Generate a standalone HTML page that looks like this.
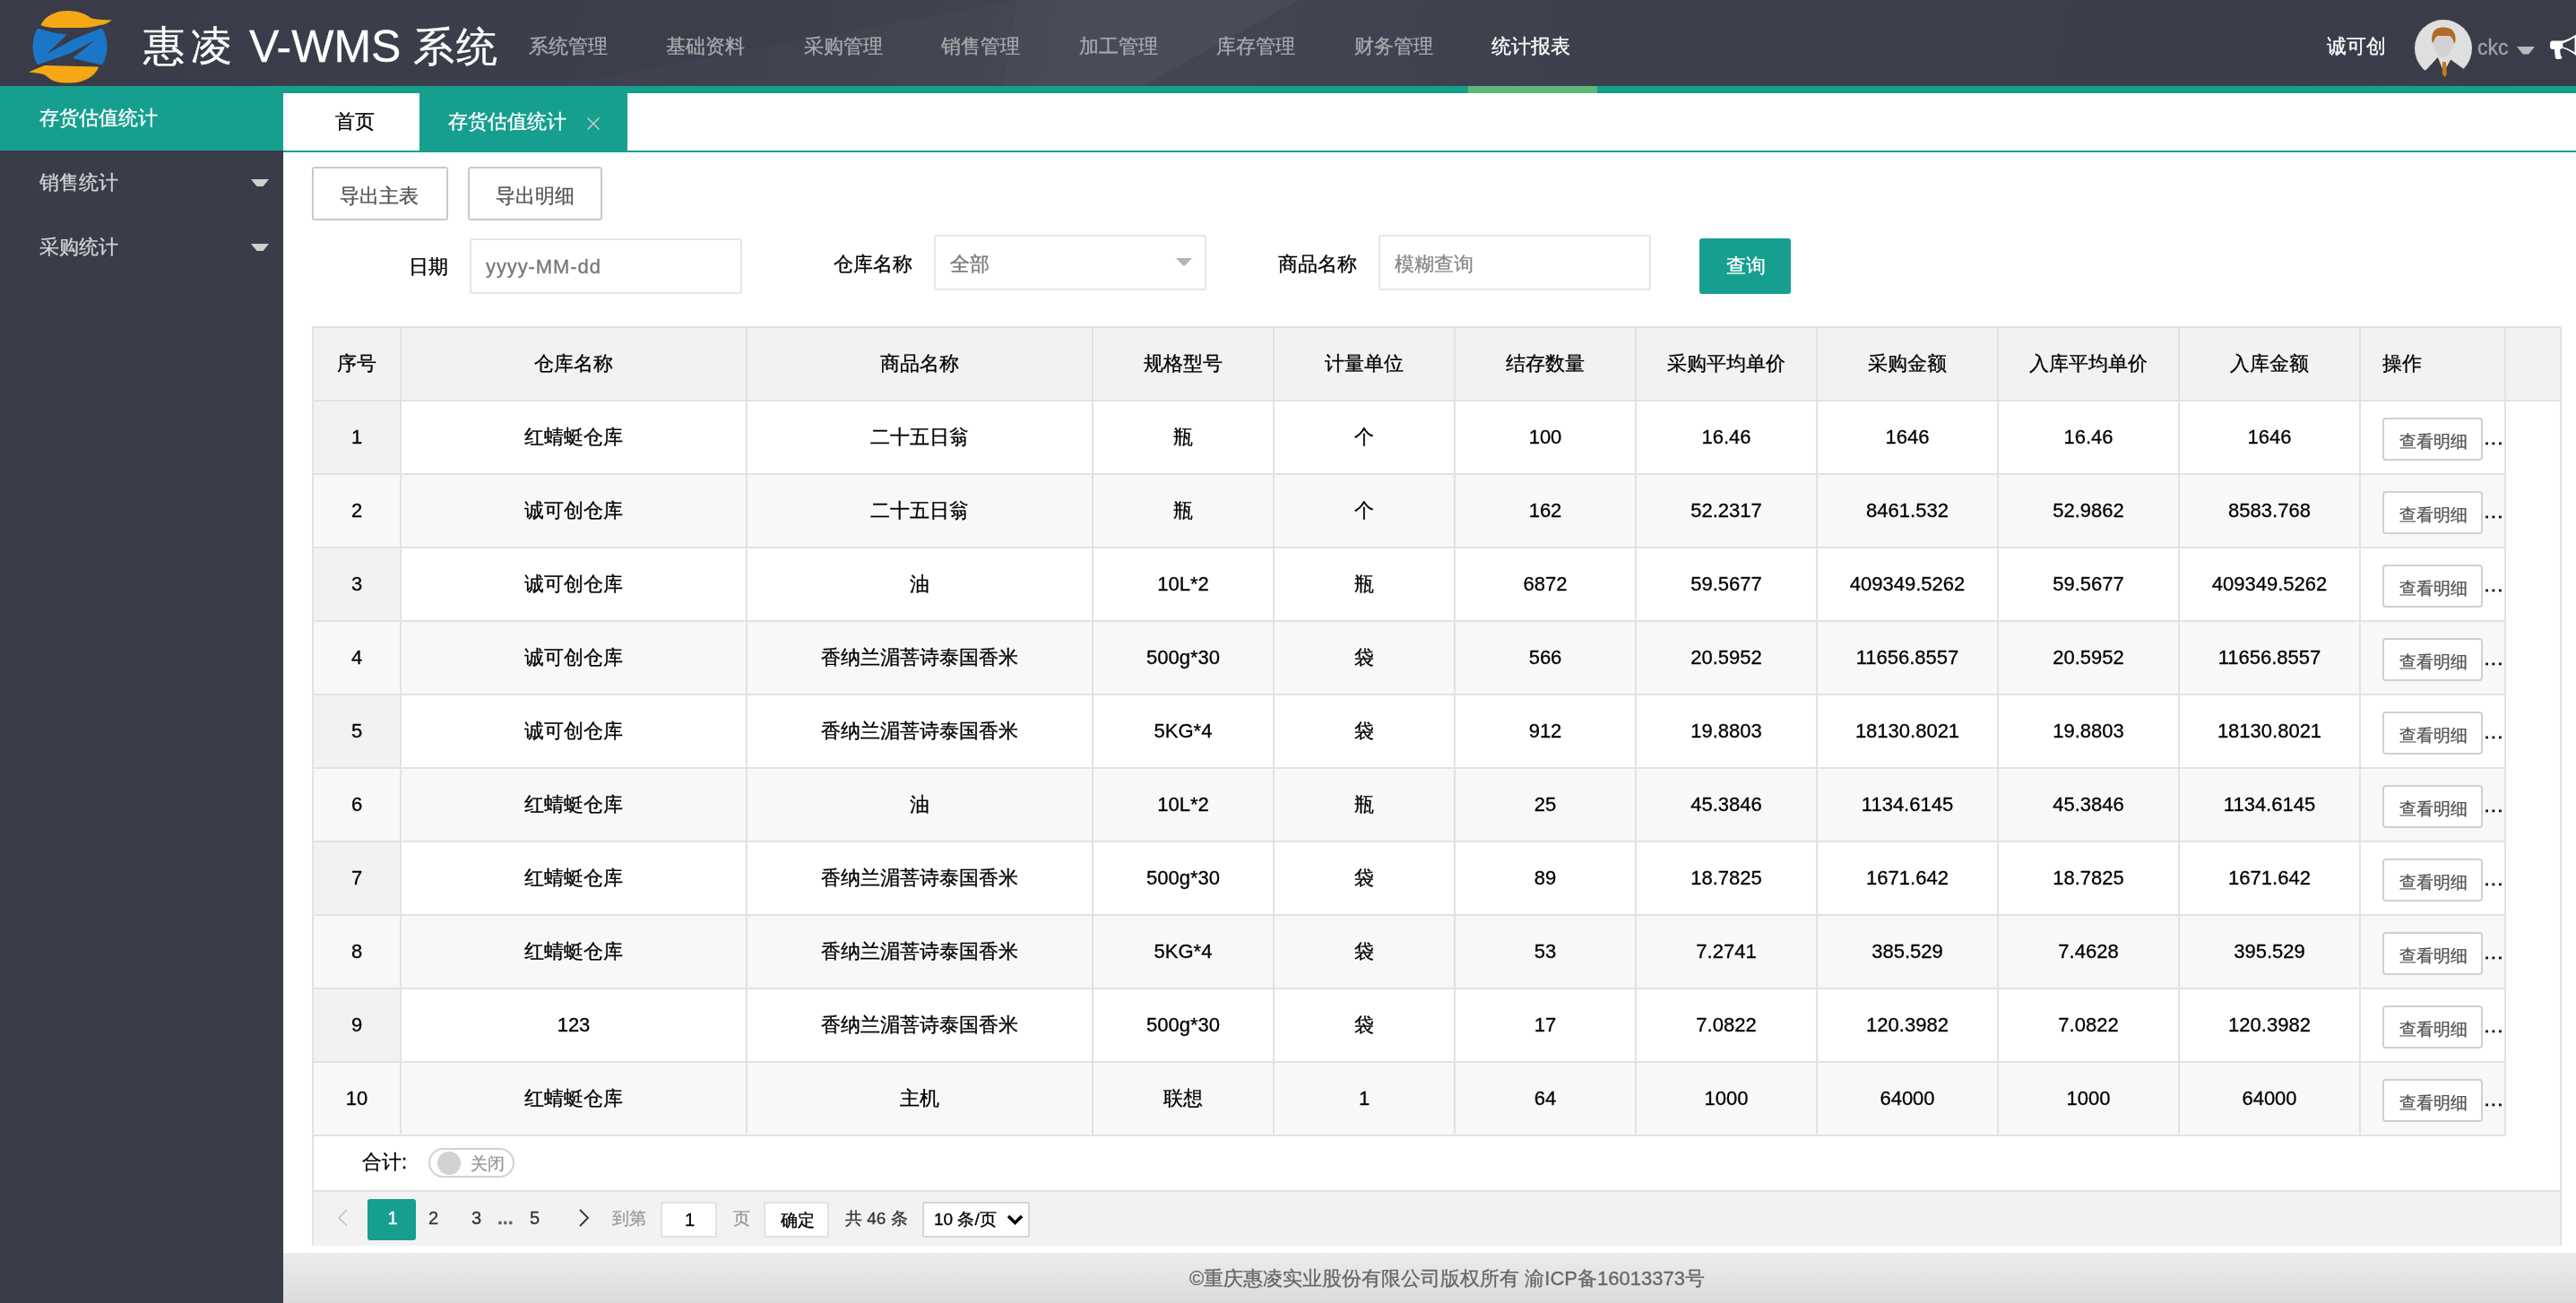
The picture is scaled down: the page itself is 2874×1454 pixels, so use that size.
<!DOCTYPE html>
<html><head><meta charset="utf-8">
<style>
*{margin:0;padding:0;box-sizing:border-box}
html,body{width:2874px;height:1454px;overflow:hidden;background:#fff;font-family:"Liberation Sans",sans-serif;font-size:22px;color:#000}
#root{position:absolute;left:0;top:0;width:2874px;height:1454px;will-change:transform;-webkit-text-stroke-width:0.3px}
.a{position:absolute}
.hdr{left:0;top:0;width:2874px;height:96px;background:linear-gradient(100deg,#393c48 0%,#3c404c 30%,#434754 45%,#3d414d 60%,#3a3d49 100%)}
.band{left:0;top:96px;width:2874px;height:8px;background:#169f8f}
.side{left:0;top:104px;width:316px;height:1350px;background:#393c49}
.nav{top:34px;height:36px;line-height:36px;color:#a9aaad;font-size:22px;white-space:nowrap}
.t{white-space:nowrap;line-height:1}
.cell{position:absolute;text-align:center;white-space:nowrap}
</style></head><body><div id="root">
<!-- header -->
<div class="a hdr"></div>
<svg class="a" style="left:0;top:0" width="2874" height="96"><path d="M1135 0 L1449 0 L1274 96 L1119 96 Z" fill="#fff" fill-opacity="0.035"/><path d="M620 96 L1135 0 L1119 96 Z" fill="#fff" fill-opacity="0.02"/></svg>
<svg class="a" style="left:0;top:0" width="140" height="96" viewBox="0 0 140 96">
  <defs><clipPath id="lc"><circle cx="78" cy="52" r="41.5"/></clipPath></defs>
  <path d="M45.5 28 C50 18 62 12 75 12 C88 12 96 16 102 20.5 C110 22 118 22 125 22.5 C120 26 116 27.5 112 28 C105 30 98 31 92 31 L68 31 C58 31 50 30.5 45.5 28 Z" fill="#f5a714"/>
  <g clip-path="url(#lc)">
    <rect x="30" y="32" width="100" height="40.5" fill="#1b76c8"/>
    <path d="M40 31 L114 31 L82 43.8 L51.7 60.6 L74.5 38.7 L59.8 36.5 Z" fill="#393c48"/>
    <path d="M40 73 L76.4 60.2 L106 45 L80.8 65 L116 73 Z" fill="#393c48"/>
  </g>
  <path d="M32 80.6 C38 78 44 75 50 73 L110 74.5 C108 82 100 88 90 91 C82 93 70 93 62 91 C56 89 52 85 50 83.5 C44 82 38 81 32 80.6 Z" fill="#f5a714"/>
</svg>
<div class="a t" style="left:160px;top:28px;font-size:46px;color:#fff">惠</div>
<div class="a t" style="left:213px;top:28px;font-size:46px;color:#fff">凌</div>
<div class="a t" style="left:278px;top:27px;font-size:50px;color:#fff">V-WMS</div>
<div class="a t" style="left:461px;top:29px;font-size:46px;color:#fff">系</div>
<div class="a t" style="left:509px;top:29px;font-size:46px;color:#fff">统</div>
<div class="a nav" style="left:590px">系统管理</div>
<div class="a nav" style="left:743px">基础资料</div>
<div class="a nav" style="left:897px">采购管理</div>
<div class="a nav" style="left:1050px">销售管理</div>
<div class="a nav" style="left:1204px">加工管理</div>
<div class="a nav" style="left:1357px">库存管理</div>
<div class="a nav" style="left:1511px">财务管理</div>
<div class="a nav" style="left:1664px;color:#fff">统计报表</div>
<div class="a nav" style="left:2596px;color:#fff">诚可创</div>
<svg class="a" style="left:2694px;top:22px" width="64" height="66" viewBox="0 0 64 66">
  <defs><clipPath id="cp"><circle cx="32" cy="32" r="32"/></clipPath></defs>
  <g clip-path="url(#cp)">
    <rect x="0" y="0" width="64" height="64" fill="#dfdfdf"/>
    <path d="M21 23 C21 18 25 17.5 32 17.5 C39 17.5 43 19 43 25 C43 33 38 42 32 42 C26 42 21 33 21 25 Z" fill="#d2d2d2"/>
    <path d="M19.5 25 C18 12 24 8.5 32 8.5 C40 8.5 46.5 12 45.5 24 L44 27 C43 22 41 18 38 18 L26 18 C23 19 21.5 22 21 26 Z" fill="#ae6a26"/>
  </g>
  <path d="M0 58 L12 56.8 L25.8 42 L32.5 58.4 L40.2 44.6 L54 54.6 L64 56 L64 66 L0 66 Z" fill="#3a3d49"/>
  <path d="M30.8 47 L35 47 L35.8 61 L33.5 64 L31 61 Z" fill="#c47a1c"/>
</svg>
<div class="a nav" style="left:2764px;top:35px;font-size:23px;color:#a4a5a8">ckc</div>
<svg class="a" style="left:2808px;top:52px" width="20" height="9"><path d="M0 0 L20 0 L13.2 8.5 L6.8 8.5 Z" fill="#b9babc"/></svg>
<svg class="a" style="left:2834px;top:30px" width="40" height="44" viewBox="0 0 40 44">
  <path d="M14 15.5 L25 15.5 Q32 14 40 8.6 L40 32 Q32 25.5 25 23.7 L22.3 25 L22.3 28.5 Q22.6 32 24.6 34.2 Q24 36 21 36.1 L19 36.1 Q17.2 36 16.8 34 L15.9 25 L14 25 Q11.1 25 11.1 22 L11.1 18.5 Q11.1 15.5 14 15.5 Z" fill="#fff"/>
  <path d="M25.3 18.3 Q31 16.5 38.5 11.8 L38.5 28.2 Q31 23.5 25.3 22.4 Z" fill="#393c48"/>
</svg>
<div class="a band"></div>
<div class="a" style="left:1638px;top:96px;width:144px;height:8px;background:#5fb878"></div>

<!-- sidebar -->
<div class="a side"></div>
<div class="a" style="left:0;top:96px;width:316px;height:72px;background:#169f8f"></div>
<div class="a t" style="left:44px;top:121px;color:#fff">存货估值统计</div>
<div class="a t" style="left:44px;top:193px;color:#d2d3d5">销售统计</div>
<svg class="a" style="left:280px;top:200px" width="20" height="8"><path d="M0 0 L20 0 L13.5 8 L6.5 8 Z" fill="#d0d0d0"/></svg>
<div class="a t" style="left:44px;top:265px;color:#d2d3d5">采购统计</div>
<svg class="a" style="left:280px;top:272px" width="20" height="8"><path d="M0 0 L20 0 L13.5 8 L6.5 8 Z" fill="#d0d0d0"/></svg>

<!-- tabs -->
<div class="a" style="left:316px;top:104px;width:2558px;height:64px;background:#fff"></div>
<div class="a" style="left:468px;top:104px;width:232px;height:64px;background:#169f8f"></div>
<div class="a t" style="left:374px;top:125px;color:#000">首页</div>
<div class="a t" style="left:500px;top:125px;color:#fff">存货估值统计</div>
<svg class="a" style="left:655px;top:131px" width="14" height="14"><path d="M0.5 0.5 L13.5 13.5 M13.5 0.5 L0.5 13.5" stroke="#dccbcf" stroke-width="1.4"/></svg>
<div class="a" style="left:316px;top:168px;width:2558px;height:2px;background:#169f8f"></div>

<!-- buttons -->
<div class="a" style="left:348px;top:186px;width:152px;height:60px;border:2px solid #cacaca;border-radius:3px"></div>
<div class="a t" style="left:379px;top:208px;color:#555">导出主表</div>
<div class="a" style="left:522px;top:186px;width:150px;height:60px;border:2px solid #cacaca;border-radius:3px"></div>
<div class="a t" style="left:553px;top:208px;color:#555">导出明细</div>

<!-- form -->
<div class="a t" style="left:456px;top:287px">日期</div>
<div class="a" style="left:524px;top:266px;width:304px;height:62px;border:2px solid #e6e6e6;border-radius:3px"></div>
<div class="a t" style="left:542px;top:287px;font-size:22px;letter-spacing:0.9px;color:#777">yyyy-MM-dd</div>
<div class="a t" style="left:930px;top:284px">仓库名称</div>
<div class="a" style="left:1042px;top:262px;width:304px;height:62px;border:2px solid #e6e6e6;border-radius:3px"></div>
<div class="a t" style="left:1060px;top:284px;color:#777">全部</div>
<svg class="a" style="left:1312px;top:288px" width="18" height="9"><path d="M0 0 L18 0 L10 8.5 L8 8.5 Z" fill="#b5b5b5"/></svg>
<div class="a t" style="left:1426px;top:284px">商品名称</div>
<div class="a" style="left:1538px;top:262px;width:304px;height:62px;border:2px solid #e6e6e6;border-radius:3px"></div>
<div class="a t" style="left:1556px;top:284px;color:#888">模糊查询</div>
<div class="a" style="left:1896px;top:266px;width:102px;height:62px;background:#169f8f;border-radius:3px"></div>
<div class="a t" style="left:1926px;top:286px;color:#fff">查询</div>

<!-- table -->
<div class="a" style="left:348px;top:364px;width:2510px;height:84px;background:#f2f2f2"></div>
<div class="a" style="left:348px;top:446px;width:98px;height:82px;background:#f2f2f2"></div>
<div class="a" style="left:348px;top:528px;width:2446px;height:82px;background:#f8f8f9"></div>
<div class="a" style="left:348px;top:610px;width:98px;height:82px;background:#f2f2f2"></div>
<div class="a" style="left:348px;top:692px;width:2446px;height:82px;background:#f8f8f9"></div>
<div class="a" style="left:348px;top:774px;width:98px;height:82px;background:#f2f2f2"></div>
<div class="a" style="left:348px;top:856px;width:2446px;height:82px;background:#f8f8f9"></div>
<div class="a" style="left:348px;top:938px;width:98px;height:82px;background:#f2f2f2"></div>
<div class="a" style="left:348px;top:1020px;width:2446px;height:82px;background:#f8f8f9"></div>
<div class="a" style="left:348px;top:1102px;width:98px;height:82px;background:#f2f2f2"></div>
<div class="a" style="left:348px;top:1184px;width:2446px;height:82px;background:#f8f8f9"></div>
<div class="a" style="left:348px;top:364px;width:2510px;height:2px;background:#e2e2e2"></div>
<div class="a" style="left:348px;top:446px;width:2510px;height:2px;background:#e2e2e2"></div>
<div class="a" style="left:348px;top:528px;width:2448px;height:2px;background:#e2e2e2"></div>
<div class="a" style="left:348px;top:610px;width:2448px;height:2px;background:#e2e2e2"></div>
<div class="a" style="left:348px;top:692px;width:2448px;height:2px;background:#e2e2e2"></div>
<div class="a" style="left:348px;top:774px;width:2448px;height:2px;background:#e2e2e2"></div>
<div class="a" style="left:348px;top:856px;width:2448px;height:2px;background:#e2e2e2"></div>
<div class="a" style="left:348px;top:938px;width:2448px;height:2px;background:#e2e2e2"></div>
<div class="a" style="left:348px;top:1020px;width:2448px;height:2px;background:#e2e2e2"></div>
<div class="a" style="left:348px;top:1102px;width:2448px;height:2px;background:#e2e2e2"></div>
<div class="a" style="left:348px;top:1184px;width:2448px;height:2px;background:#e2e2e2"></div>
<div class="a" style="left:348px;top:1266px;width:2448px;height:2px;background:#e2e2e2"></div>
<div class="a" style="left:348px;top:364px;width:2px;height:1026px;background:#e2e2e2"></div>
<div class="a" style="left:446px;top:364px;width:2px;height:904px;background:#e2e2e2"></div>
<div class="a" style="left:832px;top:364px;width:2px;height:904px;background:#e2e2e2"></div>
<div class="a" style="left:1218px;top:364px;width:2px;height:904px;background:#e2e2e2"></div>
<div class="a" style="left:1420px;top:364px;width:2px;height:904px;background:#e2e2e2"></div>
<div class="a" style="left:1622px;top:364px;width:2px;height:904px;background:#e2e2e2"></div>
<div class="a" style="left:1824px;top:364px;width:2px;height:904px;background:#e2e2e2"></div>
<div class="a" style="left:2026px;top:364px;width:2px;height:904px;background:#e2e2e2"></div>
<div class="a" style="left:2228px;top:364px;width:2px;height:904px;background:#e2e2e2"></div>
<div class="a" style="left:2430px;top:364px;width:2px;height:904px;background:#e2e2e2"></div>
<div class="a" style="left:2632px;top:364px;width:2px;height:904px;background:#e2e2e2"></div>
<div class="a" style="left:2794px;top:364px;width:2px;height:904px;background:#e2e2e2"></div>
<div class="a" style="left:2856px;top:364px;width:2px;height:1026px;background:#e2e2e2"></div>
<div class="cell" style="left:350px;top:366px;width:96px;height:80px;line-height:80px">序号</div>
<div class="cell" style="left:448px;top:366px;width:384px;height:80px;line-height:80px">仓库名称</div>
<div class="cell" style="left:834px;top:366px;width:384px;height:80px;line-height:80px">商品名称</div>
<div class="cell" style="left:1220px;top:366px;width:200px;height:80px;line-height:80px">规格型号</div>
<div class="cell" style="left:1422px;top:366px;width:200px;height:80px;line-height:80px">计量单位</div>
<div class="cell" style="left:1624px;top:366px;width:200px;height:80px;line-height:80px">结存数量</div>
<div class="cell" style="left:1826px;top:366px;width:200px;height:80px;line-height:80px">采购平均单价</div>
<div class="cell" style="left:2028px;top:366px;width:200px;height:80px;line-height:80px">采购金额</div>
<div class="cell" style="left:2230px;top:366px;width:200px;height:80px;line-height:80px">入库平均单价</div>
<div class="cell" style="left:2432px;top:366px;width:200px;height:80px;line-height:80px">入库金额</div>
<div class="cell" style="left:2634px;top:366px;width:160px;height:80px;line-height:80px;text-align:left;padding-left:24px">操作</div>
<div class="cell" style="left:350px;top:448px;width:96px;height:80px;line-height:80px">1</div>
<div class="cell" style="left:448px;top:448px;width:384px;height:80px;line-height:80px">红蜻蜓仓库</div>
<div class="cell" style="left:834px;top:448px;width:384px;height:80px;line-height:80px">二十五日翁</div>
<div class="cell" style="left:1220px;top:448px;width:200px;height:80px;line-height:80px">瓶</div>
<div class="cell" style="left:1422px;top:448px;width:200px;height:80px;line-height:80px">个</div>
<div class="cell" style="left:1624px;top:448px;width:200px;height:80px;line-height:80px">100</div>
<div class="cell" style="left:1826px;top:448px;width:200px;height:80px;line-height:80px">16.46</div>
<div class="cell" style="left:2028px;top:448px;width:200px;height:80px;line-height:80px">1646</div>
<div class="cell" style="left:2230px;top:448px;width:200px;height:80px;line-height:80px">16.46</div>
<div class="cell" style="left:2432px;top:448px;width:200px;height:80px;line-height:80px">1646</div>
<div class="a" style="left:2658px;top:466px;width:112px;height:48px;border:2px solid #d0d0d0;border-radius:4px;background:#fff"></div>
<div class="a t" style="left:2677px;top:483px;font-size:19px;color:#555">查看明细</div>
<svg class="a" style="left:2772px;top:493px" width="20" height="4"><rect x="1.2" y="0.5" width="2.8" height="2.8" fill="#111"/><rect x="8.5" y="0.5" width="2.8" height="2.8" fill="#111"/><rect x="16" y="0.5" width="2.8" height="2.8" fill="#111"/></svg>
<div class="cell" style="left:350px;top:530px;width:96px;height:80px;line-height:80px">2</div>
<div class="cell" style="left:448px;top:530px;width:384px;height:80px;line-height:80px">诚可创仓库</div>
<div class="cell" style="left:834px;top:530px;width:384px;height:80px;line-height:80px">二十五日翁</div>
<div class="cell" style="left:1220px;top:530px;width:200px;height:80px;line-height:80px">瓶</div>
<div class="cell" style="left:1422px;top:530px;width:200px;height:80px;line-height:80px">个</div>
<div class="cell" style="left:1624px;top:530px;width:200px;height:80px;line-height:80px">162</div>
<div class="cell" style="left:1826px;top:530px;width:200px;height:80px;line-height:80px">52.2317</div>
<div class="cell" style="left:2028px;top:530px;width:200px;height:80px;line-height:80px">8461.532</div>
<div class="cell" style="left:2230px;top:530px;width:200px;height:80px;line-height:80px">52.9862</div>
<div class="cell" style="left:2432px;top:530px;width:200px;height:80px;line-height:80px">8583.768</div>
<div class="a" style="left:2658px;top:548px;width:112px;height:48px;border:2px solid #d0d0d0;border-radius:4px;background:#fff"></div>
<div class="a t" style="left:2677px;top:565px;font-size:19px;color:#555">查看明细</div>
<svg class="a" style="left:2772px;top:575px" width="20" height="4"><rect x="1.2" y="0.5" width="2.8" height="2.8" fill="#111"/><rect x="8.5" y="0.5" width="2.8" height="2.8" fill="#111"/><rect x="16" y="0.5" width="2.8" height="2.8" fill="#111"/></svg>
<div class="cell" style="left:350px;top:612px;width:96px;height:80px;line-height:80px">3</div>
<div class="cell" style="left:448px;top:612px;width:384px;height:80px;line-height:80px">诚可创仓库</div>
<div class="cell" style="left:834px;top:612px;width:384px;height:80px;line-height:80px">油</div>
<div class="cell" style="left:1220px;top:612px;width:200px;height:80px;line-height:80px">10L*2</div>
<div class="cell" style="left:1422px;top:612px;width:200px;height:80px;line-height:80px">瓶</div>
<div class="cell" style="left:1624px;top:612px;width:200px;height:80px;line-height:80px">6872</div>
<div class="cell" style="left:1826px;top:612px;width:200px;height:80px;line-height:80px">59.5677</div>
<div class="cell" style="left:2028px;top:612px;width:200px;height:80px;line-height:80px">409349.5262</div>
<div class="cell" style="left:2230px;top:612px;width:200px;height:80px;line-height:80px">59.5677</div>
<div class="cell" style="left:2432px;top:612px;width:200px;height:80px;line-height:80px">409349.5262</div>
<div class="a" style="left:2658px;top:630px;width:112px;height:48px;border:2px solid #d0d0d0;border-radius:4px;background:#fff"></div>
<div class="a t" style="left:2677px;top:647px;font-size:19px;color:#555">查看明细</div>
<svg class="a" style="left:2772px;top:657px" width="20" height="4"><rect x="1.2" y="0.5" width="2.8" height="2.8" fill="#111"/><rect x="8.5" y="0.5" width="2.8" height="2.8" fill="#111"/><rect x="16" y="0.5" width="2.8" height="2.8" fill="#111"/></svg>
<div class="cell" style="left:350px;top:694px;width:96px;height:80px;line-height:80px">4</div>
<div class="cell" style="left:448px;top:694px;width:384px;height:80px;line-height:80px">诚可创仓库</div>
<div class="cell" style="left:834px;top:694px;width:384px;height:80px;line-height:80px">香纳兰湄菩诗泰国香米</div>
<div class="cell" style="left:1220px;top:694px;width:200px;height:80px;line-height:80px">500g*30</div>
<div class="cell" style="left:1422px;top:694px;width:200px;height:80px;line-height:80px">袋</div>
<div class="cell" style="left:1624px;top:694px;width:200px;height:80px;line-height:80px">566</div>
<div class="cell" style="left:1826px;top:694px;width:200px;height:80px;line-height:80px">20.5952</div>
<div class="cell" style="left:2028px;top:694px;width:200px;height:80px;line-height:80px">11656.8557</div>
<div class="cell" style="left:2230px;top:694px;width:200px;height:80px;line-height:80px">20.5952</div>
<div class="cell" style="left:2432px;top:694px;width:200px;height:80px;line-height:80px">11656.8557</div>
<div class="a" style="left:2658px;top:712px;width:112px;height:48px;border:2px solid #d0d0d0;border-radius:4px;background:#fff"></div>
<div class="a t" style="left:2677px;top:729px;font-size:19px;color:#555">查看明细</div>
<svg class="a" style="left:2772px;top:739px" width="20" height="4"><rect x="1.2" y="0.5" width="2.8" height="2.8" fill="#111"/><rect x="8.5" y="0.5" width="2.8" height="2.8" fill="#111"/><rect x="16" y="0.5" width="2.8" height="2.8" fill="#111"/></svg>
<div class="cell" style="left:350px;top:776px;width:96px;height:80px;line-height:80px">5</div>
<div class="cell" style="left:448px;top:776px;width:384px;height:80px;line-height:80px">诚可创仓库</div>
<div class="cell" style="left:834px;top:776px;width:384px;height:80px;line-height:80px">香纳兰湄菩诗泰国香米</div>
<div class="cell" style="left:1220px;top:776px;width:200px;height:80px;line-height:80px">5KG*4</div>
<div class="cell" style="left:1422px;top:776px;width:200px;height:80px;line-height:80px">袋</div>
<div class="cell" style="left:1624px;top:776px;width:200px;height:80px;line-height:80px">912</div>
<div class="cell" style="left:1826px;top:776px;width:200px;height:80px;line-height:80px">19.8803</div>
<div class="cell" style="left:2028px;top:776px;width:200px;height:80px;line-height:80px">18130.8021</div>
<div class="cell" style="left:2230px;top:776px;width:200px;height:80px;line-height:80px">19.8803</div>
<div class="cell" style="left:2432px;top:776px;width:200px;height:80px;line-height:80px">18130.8021</div>
<div class="a" style="left:2658px;top:794px;width:112px;height:48px;border:2px solid #d0d0d0;border-radius:4px;background:#fff"></div>
<div class="a t" style="left:2677px;top:811px;font-size:19px;color:#555">查看明细</div>
<svg class="a" style="left:2772px;top:821px" width="20" height="4"><rect x="1.2" y="0.5" width="2.8" height="2.8" fill="#111"/><rect x="8.5" y="0.5" width="2.8" height="2.8" fill="#111"/><rect x="16" y="0.5" width="2.8" height="2.8" fill="#111"/></svg>
<div class="cell" style="left:350px;top:858px;width:96px;height:80px;line-height:80px">6</div>
<div class="cell" style="left:448px;top:858px;width:384px;height:80px;line-height:80px">红蜻蜓仓库</div>
<div class="cell" style="left:834px;top:858px;width:384px;height:80px;line-height:80px">油</div>
<div class="cell" style="left:1220px;top:858px;width:200px;height:80px;line-height:80px">10L*2</div>
<div class="cell" style="left:1422px;top:858px;width:200px;height:80px;line-height:80px">瓶</div>
<div class="cell" style="left:1624px;top:858px;width:200px;height:80px;line-height:80px">25</div>
<div class="cell" style="left:1826px;top:858px;width:200px;height:80px;line-height:80px">45.3846</div>
<div class="cell" style="left:2028px;top:858px;width:200px;height:80px;line-height:80px">1134.6145</div>
<div class="cell" style="left:2230px;top:858px;width:200px;height:80px;line-height:80px">45.3846</div>
<div class="cell" style="left:2432px;top:858px;width:200px;height:80px;line-height:80px">1134.6145</div>
<div class="a" style="left:2658px;top:876px;width:112px;height:48px;border:2px solid #d0d0d0;border-radius:4px;background:#fff"></div>
<div class="a t" style="left:2677px;top:893px;font-size:19px;color:#555">查看明细</div>
<svg class="a" style="left:2772px;top:903px" width="20" height="4"><rect x="1.2" y="0.5" width="2.8" height="2.8" fill="#111"/><rect x="8.5" y="0.5" width="2.8" height="2.8" fill="#111"/><rect x="16" y="0.5" width="2.8" height="2.8" fill="#111"/></svg>
<div class="cell" style="left:350px;top:940px;width:96px;height:80px;line-height:80px">7</div>
<div class="cell" style="left:448px;top:940px;width:384px;height:80px;line-height:80px">红蜻蜓仓库</div>
<div class="cell" style="left:834px;top:940px;width:384px;height:80px;line-height:80px">香纳兰湄菩诗泰国香米</div>
<div class="cell" style="left:1220px;top:940px;width:200px;height:80px;line-height:80px">500g*30</div>
<div class="cell" style="left:1422px;top:940px;width:200px;height:80px;line-height:80px">袋</div>
<div class="cell" style="left:1624px;top:940px;width:200px;height:80px;line-height:80px">89</div>
<div class="cell" style="left:1826px;top:940px;width:200px;height:80px;line-height:80px">18.7825</div>
<div class="cell" style="left:2028px;top:940px;width:200px;height:80px;line-height:80px">1671.642</div>
<div class="cell" style="left:2230px;top:940px;width:200px;height:80px;line-height:80px">18.7825</div>
<div class="cell" style="left:2432px;top:940px;width:200px;height:80px;line-height:80px">1671.642</div>
<div class="a" style="left:2658px;top:958px;width:112px;height:48px;border:2px solid #d0d0d0;border-radius:4px;background:#fff"></div>
<div class="a t" style="left:2677px;top:975px;font-size:19px;color:#555">查看明细</div>
<svg class="a" style="left:2772px;top:985px" width="20" height="4"><rect x="1.2" y="0.5" width="2.8" height="2.8" fill="#111"/><rect x="8.5" y="0.5" width="2.8" height="2.8" fill="#111"/><rect x="16" y="0.5" width="2.8" height="2.8" fill="#111"/></svg>
<div class="cell" style="left:350px;top:1022px;width:96px;height:80px;line-height:80px">8</div>
<div class="cell" style="left:448px;top:1022px;width:384px;height:80px;line-height:80px">红蜻蜓仓库</div>
<div class="cell" style="left:834px;top:1022px;width:384px;height:80px;line-height:80px">香纳兰湄菩诗泰国香米</div>
<div class="cell" style="left:1220px;top:1022px;width:200px;height:80px;line-height:80px">5KG*4</div>
<div class="cell" style="left:1422px;top:1022px;width:200px;height:80px;line-height:80px">袋</div>
<div class="cell" style="left:1624px;top:1022px;width:200px;height:80px;line-height:80px">53</div>
<div class="cell" style="left:1826px;top:1022px;width:200px;height:80px;line-height:80px">7.2741</div>
<div class="cell" style="left:2028px;top:1022px;width:200px;height:80px;line-height:80px">385.529</div>
<div class="cell" style="left:2230px;top:1022px;width:200px;height:80px;line-height:80px">7.4628</div>
<div class="cell" style="left:2432px;top:1022px;width:200px;height:80px;line-height:80px">395.529</div>
<div class="a" style="left:2658px;top:1040px;width:112px;height:48px;border:2px solid #d0d0d0;border-radius:4px;background:#fff"></div>
<div class="a t" style="left:2677px;top:1057px;font-size:19px;color:#555">查看明细</div>
<svg class="a" style="left:2772px;top:1067px" width="20" height="4"><rect x="1.2" y="0.5" width="2.8" height="2.8" fill="#111"/><rect x="8.5" y="0.5" width="2.8" height="2.8" fill="#111"/><rect x="16" y="0.5" width="2.8" height="2.8" fill="#111"/></svg>
<div class="cell" style="left:350px;top:1104px;width:96px;height:80px;line-height:80px">9</div>
<div class="cell" style="left:448px;top:1104px;width:384px;height:80px;line-height:80px">123</div>
<div class="cell" style="left:834px;top:1104px;width:384px;height:80px;line-height:80px">香纳兰湄菩诗泰国香米</div>
<div class="cell" style="left:1220px;top:1104px;width:200px;height:80px;line-height:80px">500g*30</div>
<div class="cell" style="left:1422px;top:1104px;width:200px;height:80px;line-height:80px">袋</div>
<div class="cell" style="left:1624px;top:1104px;width:200px;height:80px;line-height:80px">17</div>
<div class="cell" style="left:1826px;top:1104px;width:200px;height:80px;line-height:80px">7.0822</div>
<div class="cell" style="left:2028px;top:1104px;width:200px;height:80px;line-height:80px">120.3982</div>
<div class="cell" style="left:2230px;top:1104px;width:200px;height:80px;line-height:80px">7.0822</div>
<div class="cell" style="left:2432px;top:1104px;width:200px;height:80px;line-height:80px">120.3982</div>
<div class="a" style="left:2658px;top:1122px;width:112px;height:48px;border:2px solid #d0d0d0;border-radius:4px;background:#fff"></div>
<div class="a t" style="left:2677px;top:1139px;font-size:19px;color:#555">查看明细</div>
<svg class="a" style="left:2772px;top:1149px" width="20" height="4"><rect x="1.2" y="0.5" width="2.8" height="2.8" fill="#111"/><rect x="8.5" y="0.5" width="2.8" height="2.8" fill="#111"/><rect x="16" y="0.5" width="2.8" height="2.8" fill="#111"/></svg>
<div class="cell" style="left:350px;top:1186px;width:96px;height:80px;line-height:80px">10</div>
<div class="cell" style="left:448px;top:1186px;width:384px;height:80px;line-height:80px">红蜻蜓仓库</div>
<div class="cell" style="left:834px;top:1186px;width:384px;height:80px;line-height:80px">主机</div>
<div class="cell" style="left:1220px;top:1186px;width:200px;height:80px;line-height:80px">联想</div>
<div class="cell" style="left:1422px;top:1186px;width:200px;height:80px;line-height:80px">1</div>
<div class="cell" style="left:1624px;top:1186px;width:200px;height:80px;line-height:80px">64</div>
<div class="cell" style="left:1826px;top:1186px;width:200px;height:80px;line-height:80px">1000</div>
<div class="cell" style="left:2028px;top:1186px;width:200px;height:80px;line-height:80px">64000</div>
<div class="cell" style="left:2230px;top:1186px;width:200px;height:80px;line-height:80px">1000</div>
<div class="cell" style="left:2432px;top:1186px;width:200px;height:80px;line-height:80px">64000</div>
<div class="a" style="left:2658px;top:1204px;width:112px;height:48px;border:2px solid #d0d0d0;border-radius:4px;background:#fff"></div>
<div class="a t" style="left:2677px;top:1221px;font-size:19px;color:#555">查看明细</div>
<svg class="a" style="left:2772px;top:1231px" width="20" height="4"><rect x="1.2" y="0.5" width="2.8" height="2.8" fill="#111"/><rect x="8.5" y="0.5" width="2.8" height="2.8" fill="#111"/><rect x="16" y="0.5" width="2.8" height="2.8" fill="#111"/></svg>
<div class="a t" style="left:404px;top:1286px">合计:</div>
<div class="a" style="left:478px;top:1281px;width:96px;height:33px;border:2px solid #d2d2d2;border-radius:17px;background:#fff"></div>
<div class="a" style="left:488px;top:1285px;width:26px;height:26px;border-radius:13px;background:#d2d2d2"></div>
<div class="a t" style="left:525px;top:1289px;font-size:19px;color:#999">关闭</div>
<div class="a" style="left:348px;top:1328px;width:2510px;height:62px;background:#f2f2f2;border-top:2px solid #e2e2e2;border-left:2px solid #e2e2e2;border-right:2px solid #e2e2e2"></div>
<svg class="a" style="left:376px;top:1349px" width="12" height="20"><path d="M11 1 L2 10 L11 19" stroke="#c2c2c2" stroke-width="1.6" fill="none"/></svg>
<div class="a" style="left:410px;top:1338px;width:54px;height:46px;background:#169f8f;border-radius:3px"></div>
<div class="a t" style="left:411px;top:1349px;width:54px;text-align:center;font-size:20px;color:#fff">1</div>
<div class="a t" style="left:478px;top:1349px;font-size:20px;color:#333">2</div>
<div class="a t" style="left:526px;top:1349px;font-size:20px;color:#333">3</div>
<div class="a t" style="left:555px;top:1348px;font-size:21px;font-weight:bold;color:#666">...</div>
<div class="a t" style="left:591px;top:1349px;font-size:20px;color:#333">5</div>
<svg class="a" style="left:645px;top:1349px" width="14" height="20"><path d="M2 1 L11 10 L2 19" stroke="#333" stroke-width="1.8" fill="none"/></svg>
<div class="a t" style="left:683px;top:1350px;font-size:19px;color:#999">到第</div>
<div class="a" style="left:737px;top:1341px;width:63px;height:40px;border:2px solid #e2e2e2;border-radius:3px;background:#fff"></div>
<div class="a t" style="left:764px;top:1351px;font-size:20px;color:#000">1</div>
<div class="a t" style="left:818px;top:1350px;font-size:19px;color:#999">页</div>
<div class="a" style="left:852px;top:1341px;width:73px;height:40px;border:2px solid #e2e2e2;border-radius:3px;background:#fff"></div>
<div class="a t" style="left:871px;top:1352px;font-size:19px;color:#000">确定</div>
<div class="a t" style="left:943px;top:1350px;font-size:19px;color:#333">共 46 条</div>
<div class="a" style="left:1029px;top:1341px;width:120px;height:40px;border:2px solid #d6d6d6;border-radius:3px;background:#fff"></div>
<div class="a t" style="left:1042px;top:1351px;font-size:19px;color:#000">10 条/页</div>
<svg class="a" style="left:1123px;top:1355px" width="19" height="12"><path d="M2 2 L9.5 9.5 L17 2" stroke="#000" stroke-width="3.5" fill="none"/></svg>

<!-- footer -->
<div class="a" style="left:316px;top:1398px;width:2558px;height:56px;background:linear-gradient(#ececec,#e4e4e4 50%,#dadada)"></div>
<div class="a t" style="left:1327px;top:1416px;color:#666">©重庆惠凌实业股份有限公司版权所有 渝ICP备16013373号</div>
</div></body></html>
